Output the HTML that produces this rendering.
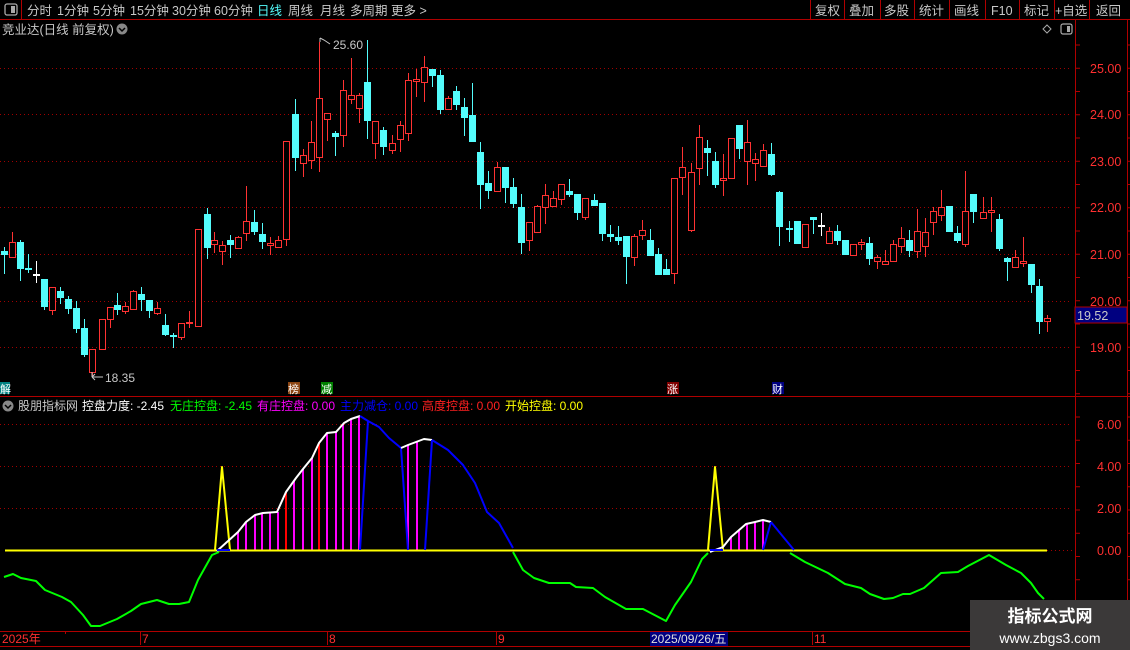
<!DOCTYPE html>
<html><head><meta charset="utf-8">
<style>
html,body{margin:0;padding:0;background:#000;width:1130px;height:650px;overflow:hidden}
svg{display:block}
text{font-family:"Liberation Sans","Noto Sans CJK SC",sans-serif}
</style></head>
<body>
<svg id="s" width="1130" height="650" viewBox="0 0 1130 650" xmlns="http://www.w3.org/2000/svg">
<rect width="1130" height="650" fill="#000"/>
<!-- top bar -->
<line x1="0" y1="19.5" x2="1130" y2="19.5" stroke="#b00000"/>
<line x1="21.5" y1="0" x2="21.5" y2="19" stroke="#b00000"/>
<rect x="5" y="4" width="12" height="11" rx="2" fill="none" stroke="#aaa" stroke-width="1.3"/>
<rect x="11" y="6" width="4" height="7" fill="#aaa"/>
<g font-size="12.5" fill="#c8c8c8">
<text x="27" y="15">分时</text>
<text x="57" y="15">1分钟</text>
<text x="93" y="15">5分钟</text>
<text x="130" y="15">15分钟</text>
<text x="172" y="15">30分钟</text>
<text x="214" y="15">60分钟</text>
<text x="257" y="15" fill="#54fcfc">日线</text>
<text x="288" y="15">周线</text>
<text x="320" y="15">月线</text>
<text x="350" y="15">多周期</text>
<text x="391" y="15">更多 &gt;</text>
</g>
<g stroke="#b00000">
<line x1="810.5" y1="0" x2="810.5" y2="19"/><line x1="844.5" y1="0" x2="844.5" y2="19"/>
<line x1="880.5" y1="0" x2="880.5" y2="19"/><line x1="914.5" y1="0" x2="914.5" y2="19"/>
<line x1="949.5" y1="0" x2="949.5" y2="19"/><line x1="985.5" y1="0" x2="985.5" y2="19"/>
<line x1="1019.5" y1="0" x2="1019.5" y2="19"/><line x1="1054.5" y1="0" x2="1054.5" y2="19"/>
<line x1="1089.5" y1="0" x2="1089.5" y2="19"/>
</g>
<g font-size="12.5" fill="#c8c8c8">
<text x="815" y="15">复权</text><text x="849" y="15">叠加</text><text x="884" y="15">多股</text>
<text x="919" y="15">统计</text><text x="954" y="15">画线</text><text x="991" y="15">F10</text>
<text x="1024" y="15">标记</text><text x="1055" y="15">+自选</text><text x="1096" y="15">返回</text>
</g>
<!-- second row -->
<text x="2" y="34" font-size="12.5" fill="#c8c8c8">竞业达(日线 前复权)</text>
<circle cx="122" cy="29" r="5.5" fill="#888"/>
<path d="M119 28 L122 31 L125 28" stroke="#000" stroke-width="1.5" fill="none"/>
<path d="M1047 25 L1051 29 L1047 33 L1043 29 Z" fill="none" stroke="#aaa"/>
<rect x="1061" y="24" width="11" height="10" rx="2" fill="none" stroke="#aaa" stroke-width="1.2"/>
<rect x="1067" y="26" width="3" height="6" fill="#aaa"/>
<!-- right axis lines -->
<line x1="1075.5" y1="20" x2="1075.5" y2="631" stroke="#b00000"/>
<line x1="1127.5" y1="20" x2="1127.5" y2="631" stroke="#b00000"/>
<!-- price grid -->
<g stroke="#a00000" stroke-dasharray="1 3">
<line x1="0" y1="68.5" x2="1072" y2="68.5"/><line x1="0" y1="114.5" x2="1072" y2="114.5"/>
<line x1="0" y1="161.5" x2="1072" y2="161.5"/><line x1="0" y1="207.5" x2="1072" y2="207.5"/>
<line x1="0" y1="254.5" x2="1072" y2="254.5"/><line x1="0" y1="301.5" x2="1072" y2="301.5"/>
<line x1="0" y1="347.5" x2="1072" y2="347.5"/>
</g>
<g font-size="12.5" fill="#ff3030">
<text x="1090" y="73">25.00</text><text x="1090" y="119">24.00</text><text x="1090" y="166">23.00</text>
<text x="1090" y="212">22.00</text><text x="1090" y="259">21.00</text><text x="1090" y="306">20.00</text>
<text x="1090" y="352">19.00</text>
</g>
<g id="ticks" stroke="#b00000"></g>
<rect x="1075" y="307" width="52" height="16" fill="#000080" stroke="#b00000"/>
<text x="1077" y="320" font-size="12.5" fill="#c8c8c8">19.52</text>
<g id="candles"></g>
<!-- hi/lo labels -->
<path d="M320 42 L320 38 M320 38 L324 40 L330 44" stroke="#c8c8c8" fill="none"/>
<text x="333" y="49" font-size="12" fill="#c8c8c8">25.60</text>
<path d="M92 377 L103 377 M92 377 L95 374 M92 377 L95 380 M92 372 L92 377" stroke="#c8c8c8" fill="none"/>
<text x="105" y="382" font-size="12" fill="#c8c8c8">18.35</text>
<!-- markers -->
<g font-size="11">
<rect x="0" y="382" width="10" height="12" fill="#008080"/><text x="0" y="393" fill="#fff">解</text>
<rect x="288" y="382" width="12" height="12" fill="#8b4513"/><text x="288" y="393" fill="#fff">榜</text>
<rect x="321" y="382" width="12" height="12" fill="#008000"/><text x="321" y="393" fill="#fff">减</text>
<rect x="667" y="382" width="12" height="12" fill="#800000"/><text x="667" y="393" fill="#fff">涨</text>
<rect x="772" y="382" width="12" height="12" fill="#000080"/><text x="772" y="393" fill="#fff">财</text>
</g>
<line x1="0" y1="396.5" x2="1130" y2="396.5" stroke="#b00000"/>
<!-- indicator title -->
<circle cx="8" cy="406" r="5.5" fill="#888"/>
<path d="M5 405 L8 408 L11 405" stroke="#000" stroke-width="1.5" fill="none"/>
<g font-size="12">
<text x="18" y="410" fill="#c8c8c8">股朋指标网</text>
<text x="82" y="410" fill="#fff">控盘力度: -2.45</text>
<text x="170" y="410" fill="#00ff00">无庄控盘: -2.45</text>
<text x="257" y="410" fill="#ff00ff">有庄控盘: 0.00</text>
<text x="340" y="410" fill="#0000ff">主力减仓: 0.00</text>
<text x="422" y="410" fill="#ff2020">高度控盘: 0.00</text>
<text x="505" y="410" fill="#ffff00">开始控盘: 0.00</text>
</g>
<g stroke="#a00000" stroke-dasharray="1 3">
<line x1="0" y1="424.5" x2="1072" y2="424.5"/><line x1="0" y1="466.5" x2="1072" y2="466.5"/>
<line x1="0" y1="508.5" x2="1072" y2="508.5"/><line x1="1047" y1="550.5" x2="1072" y2="550.5"/>
</g>
<g font-size="12.5" fill="#ff3030">
<text x="1097" y="429">6.00</text><text x="1097" y="471">4.00</text>
<text x="1097" y="513">2.00</text><text x="1097" y="555">0.00</text>
</g>
<!-- indicator bars -->
<g stroke="#ff00ff" stroke-width="2">
<line x1="238" y1="550" x2="238" y2="532"/><line x1="246" y1="550" x2="246" y2="522"/>
<line x1="255" y1="550" x2="255" y2="515"/><line x1="262" y1="550" x2="262" y2="513"/>
<line x1="270" y1="550" x2="270" y2="512"/><line x1="278" y1="550" x2="278" y2="512"/>
<line x1="294" y1="550" x2="294" y2="481"/><line x1="303" y1="550" x2="303" y2="469"/>
<line x1="312" y1="550" x2="312" y2="458"/><line x1="327" y1="550" x2="327" y2="433"/>
<line x1="336" y1="550" x2="336" y2="432"/><line x1="343" y1="550" x2="343" y2="424"/>
<line x1="351" y1="550" x2="351" y2="419"/><line x1="359" y1="550" x2="359" y2="416"/>
<line x1="408" y1="550" x2="408" y2="445"/><line x1="417" y1="550" x2="417" y2="441"/>
<line x1="731" y1="550" x2="731" y2="537"/><line x1="739" y1="550" x2="739" y2="531"/>
<line x1="747" y1="550" x2="747" y2="524"/><line x1="755" y1="550" x2="755" y2="522"/>
<line x1="763" y1="550" x2="763" y2="520"/>
</g>
<g stroke="#ff0000" stroke-width="2">
<line x1="286" y1="550" x2="286" y2="492"/><line x1="319" y1="550" x2="319" y2="443"/>
</g>
<line x1="5" y1="550.5" x2="1047" y2="550.5" stroke="#ffff00" stroke-width="2"/>
<g fill="none" stroke-width="2" stroke-linejoin="round">
<polyline stroke="#ffff00" points="215,550 222,467 230,550"/>
<polyline stroke="#ffff00" points="708,550 715,467 723,550"/>
<polyline stroke="#ffffff" points="217,551 238,532 246,522 255,515 263,513 277,512 286,492 296,478 303,469 312,458 319,443 327,433 336,432 344,423 351,419 360,416"/>
<polyline stroke="#0000ff" points="360,416 368,421 379,427 389,438 401,448"/>
<polyline stroke="#0000ff" points="368,421 360,550"/>
<polyline stroke="#0000ff" points="401,448 408,550"/>
<polyline stroke="#ffffff" points="401,448 408,445 424,439 432,440"/>
<polyline stroke="#0000ff" points="432,440 425,550"/>
<polyline stroke="#0000ff" points="432,440 448,450 463,465 475,483 487,512 499,523 513,548"/>
<polyline stroke="#ffffff" points="710,552 723,547 731,537 738,531 746,524 755,522 763,520 771,522"/>
<polyline stroke="#0000ff" points="771,522 763,550"/>
<polyline stroke="#0000ff" points="771,522 780,533 794,550"/>
<polyline stroke="#0000ff" points="217,550 230,550"/>
<polyline stroke="#0000ff" points="710,550 723,550"/>
<polyline stroke="#00ff00" points="4,577 13,574 21,578 36,581 45,590 62,597 71,602 83,615 91,626 100,626 117,619 131,611 141,604 157,600 169,604 179,604 189,602 198,580 212,555 219,552"/>
<polyline stroke="#00ff00" points="513,552 523,570 534,578 549,583 570,583 576,587 593,588 605,597 626,609 643,609 666,621 675,605 691,582 702,559 708,553"/>
<polyline stroke="#00ff00" points="790,553 805,562 828,573 845,584 861,588 870,594 884,599 893,598 903,594 910,594 924,588 941,573 958,572 968,566 989,555 1006,565 1021,573 1031,583 1038,593 1044,599"/>
</g>
<!-- date axis -->
<line x1="0" y1="631.5" x2="1130" y2="631.5" stroke="#b00000"/>
<line x1="0" y1="646.5" x2="1130" y2="646.5" stroke="#b00000"/>
<g stroke="#b00000">
<line x1="65.5" y1="631" x2="65.5" y2="634"/><line x1="140.5" y1="631" x2="140.5" y2="645"/>
<line x1="327.5" y1="631" x2="327.5" y2="645"/><line x1="496.5" y1="631" x2="496.5" y2="645"/>
<line x1="812.5" y1="631" x2="812.5" y2="645"/>
</g>
<rect x="650" y="632" width="78" height="14" fill="#000080"/>
<g font-size="12" fill="#ff3030">
<text x="2" y="643">2025年</text><text x="142" y="643">7</text><text x="329" y="643">8</text>
<text x="498" y="643">9</text><text x="814" y="643">11</text>
</g>
<text x="651" y="643" font-size="12" fill="#e0e0e0">2025/09/26/五</text>
<!-- watermark -->
<rect x="970" y="600" width="160" height="50" fill="#3b3939"/>
<text x="1050" y="622" font-size="17" font-weight="bold" fill="#fff" text-anchor="middle">指标公式网</text>
<text x="1050" y="643" font-size="14" fill="#fff" text-anchor="middle">www.zbgs3.com</text>
</svg>
<script>
var D=[[4,251,254,247,273,'c'],[12,242,257,232,257,'r'],[20,242,268,240,280,'c'],[28,268,268,254,272,'c'],[36,274,274,261,282,'w'],[44,279,306,279,309,'c'],[52,287,310,287,314,'r'],[60,291,297,287,303,'c'],[68,299,308,296,313,'c'],[76,308,328,301,332,'c'],[84,328,354,319,356,'c'],[92,349,372,349,375,'r'],[102,319,349,319,349,'r'],[110,307,319,307,327,'r'],[117,305,309,293,314,'c'],[125,306,311,302,313,'r'],[133,291,309,290,309,'r'],[141,294,299,287,310,'c'],[149,300,310,300,317,'c'],[157,308,313,302,314,'r'],[165,325,334,314,335,'c'],[173,335,335,333,347,'c'],[181,323,337,323,339,'r'],[189,322,322,311,327,'r'],[198,229,326,229,326,'r'],[207,214,247,208,258,'c'],[214,240,244,232,252,'r'],[222,245,251,241,264,'r'],[230,240,244,235,257,'c'],[238,237,248,236,248,'r'],[246,221,233,186,240,'r'],[254,222,231,210,234,'c'],[262,234,241,223,248,'c'],[270,243,245,237,254,'r'],[278,240,247,236,247,'r'],[286,141,239,141,245,'r'],[295,114,157,99,170,'c'],[303,155,163,149,176,'r'],[311,142,160,121,168,'r'],[319,98,157,42,171,'r'],[327,113,119,113,140,'r'],[335,133,136,131,155,'c'],[343,90,135,80,146,'r'],[351,95,99,58,103,'r'],[359,95,108,93,122,'r'],[367,82,120,40,138,'c'],[375,121,143,121,158,'r'],[383,130,146,127,154,'c'],[392,143,150,135,153,'r'],[400,125,139,121,151,'r'],[408,80,133,73,140,'r'],[416,79,81,69,96,'r'],[424,67,82,56,101,'r'],[432,69,75,69,86,'c'],[440,75,109,70,113,'c'],[448,98,109,96,109,'r'],[456,91,104,86,109,'c'],[464,107,117,98,135,'c'],[472,115,141,83,141,'c'],[480,152,184,142,208,'c'],[488,183,190,171,198,'c'],[497,167,191,162,191,'r'],[505,167,187,167,202,'c'],[513,187,203,178,207,'c'],[521,207,242,194,253,'c'],[529,222,240,222,250,'r'],[537,206,232,205,232,'r'],[545,195,207,184,223,'r'],[553,198,206,191,206,'r'],[561,184,199,184,204,'r'],[569,191,194,179,196,'c'],[577,194,212,194,219,'c'],[585,198,217,198,219,'r'],[594,200,205,194,205,'c'],[602,203,233,203,240,'c'],[610,234,236,225,241,'c'],[618,237,240,226,244,'c'],[626,236,256,236,283,'c'],[634,236,257,234,265,'r'],[642,230,235,220,239,'r'],[650,240,255,229,255,'c'],[658,254,274,248,274,'c'],[666,269,274,259,274,'c'],[674,178,273,178,283,'r'],[682,167,177,147,194,'r'],[691,172,230,163,231,'r'],[699,137,168,125,184,'r'],[707,148,152,140,175,'c'],[715,161,184,152,187,'c'],[723,178,180,154,195,'r'],[731,138,178,138,178,'r'],[739,125,148,125,158,'c'],[747,142,161,120,184,'r'],[755,159,163,153,180,'r'],[763,150,166,144,166,'r'],[771,154,174,143,175,'c'],[779,192,226,191,245,'c'],[789,228,228,221,241,'c'],[797,221,243,221,243,'c'],[805,224,247,224,247,'r'],[813,217,219,217,233,'c'],[821,225,225,213,235,'w'],[829,231,243,227,243,'r'],[837,231,240,225,244,'c'],[845,240,254,240,254,'c'],[853,244,255,244,255,'r'],[861,242,244,239,249,'r'],[869,243,258,237,264,'c'],[877,257,261,255,268,'r'],[885,261,264,250,264,'r'],[893,244,261,240,261,'r'],[901,238,246,227,252,'r'],[909,240,250,230,256,'c'],[917,231,251,209,257,'r'],[925,232,246,218,256,'r'],[933,211,222,207,234,'r'],[941,207,215,190,220,'r'],[949,206,231,206,231,'c'],[957,233,240,226,242,'c'],[965,211,244,171,246,'r'],[973,194,211,194,222,'c'],[983,212,218,197,218,'r'],[991,210,212,197,231,'r'],[999,219,248,214,250,'c'],[1007,258,261,257,280,'c'],[1015,257,267,250,267,'r'],[1023,261,263,237,266,'r'],[1031,264,284,264,292,'c'],[1039,286,321,279,333,'c'],[1047,318,321,315,331,'r']];
var NS="http://www.w3.org/2000/svg",g=document.getElementById('candles'),h='';
D.forEach(function(d){
 var x=d[0],t=d[1],b=d[2],hi=d[3],lo=d[4],c=d[5];
 var col=c=='r'?'#ff3232':(c=='w'?'#ffffff':'#54fcfc');
 h+='<line x1="'+(x+0.5)+'" y1="'+hi+'" x2="'+(x+0.5)+'" y2="'+(lo+1)+'" stroke="'+col+'"/>';
 if(b-t<2){h+='<rect x="'+(x-3)+'" y="'+t+'" width="7" height="'+Math.max(2,b-t)+'" fill="'+col+'"/>';}
 else if(c=='r'){h+='<rect x="'+(x-2.5)+'" y="'+(t+0.5)+'" width="6" height="'+(b-t)+'" fill="#000" stroke="'+col+'"/>';}
 else{h+='<rect x="'+(x-3)+'" y="'+t+'" width="7" height="'+(b-t+1)+'" fill="'+col+'"/>';}
});
g.innerHTML=h;
var tk='';
for(var y=45;y<630;y+=23.25){tk+='<line x1="1075" y1="'+y+'" x2="1080" y2="'+y+'"/><line x1="1127" y1="'+y+'" x2="1130" y2="'+y+'"/>';}
document.getElementById('ticks').innerHTML=tk;
</script>
</body></html>
